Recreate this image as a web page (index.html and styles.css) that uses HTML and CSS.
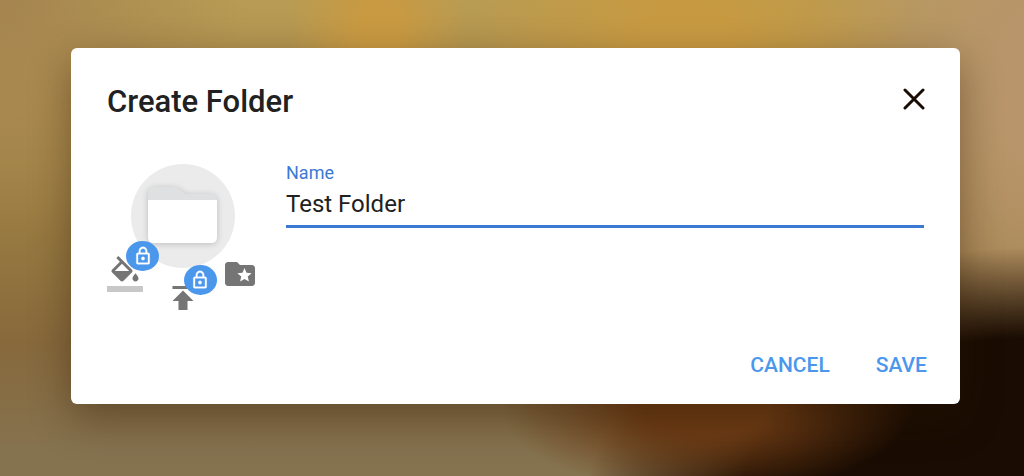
FILE: index.html
```
<!DOCTYPE html>
<html lang="en">
<head>
    <meta charset="UTF-8">
    <meta name="viewport" content="width=device-width, initial-scale=1.0">
    <title>Create Folder</title>
    <link rel="stylesheet" href="styles.css">
</head>
<body>
    <form class="dialog" role="dialog" aria-labelledby="dialogTitle">
        <header class="dialog-header">
            <h1 id="dialogTitle">Create Folder</h1>
            <button type="button" class="close-btn" aria-label="Close">
                <svg viewBox="0 0 22 22"><path d="M2 2l18 18M20 2L2 20"/></svg>
            </button>
        </header>

        <div class="dialog-body">
            <div class="icon-picker">
                <div class="folder-preview">
                    <svg viewBox="0 0 104 104">
                        <path class="folder-back" d="M17 30q0-7 7-7h19q3 0 5 2l4 3q2 2 5 2h22q7 0 7 7v35q0 7-7 7H24q-7 0-7-7z"/>
                        <path class="folder-front" d="M17 36h69v37q0 6-6 6H23q-6 0-6-6z"/>
                    </svg>
                </div>
                <div class="icon-tools">
                    <button type="button" class="tool" aria-label="Folder color">
                        <svg viewBox="0 0 24 24">
                            <path d="M16.56 8.94L7.62 0 6.21 1.41l2.38 2.38-5.15 5.15c-.59.59-.59 1.54 0 2.12l5.5 5.5c.29.29.68.44 1.06.44s.77-.15 1.06-.44l5.5-5.5c.59-.58.59-1.53 0-2.12zM5.21 10L10 5.21 14.79 10H5.21zM19 11.5s-2 2.17-2 3.5c0 1.1.9 2 2 2s2-.9 2-2c0-1.33-2-3.5-2-3.5z"/>
                            <path class="swatch" d="M0 20h24v4H0z"/>
                        </svg>
                        <span class="lock-badge">
                            <svg viewBox="0 0 24 24"><path d="M12 17c1.1 0 2-.9 2-2s-.9-2-2-2-2 .9-2 2 .9 2 2 2zm6-9h-1V6c0-2.76-2.24-5-5-5S7 3.24 7 6v2H6c-1.1 0-2 .9-2 2v10c0 1.1.9 2 2 2h12c1.1 0 2-.9 2-2V10c0-1.1-.9-2-2-2zM8.9 6c0-1.71 1.39-3.1 3.1-3.1s3.1 1.39 3.1 3.1v2H8.9V6zM18 20H6V10h12v10z"/></svg>
                        </span>
                    </button>
                    <button type="button" class="tool tool-upload" aria-label="Upload icon">
                        <svg viewBox="0 0 24 24"><path d="M5 4v2h14V4H5zm0 10h4v6h6v-6h4l-7-7-7 7z"/></svg>
                        <span class="lock-badge">
                            <svg viewBox="0 0 24 24"><path d="M12 17c1.1 0 2-.9 2-2s-.9-2-2-2-2 .9-2 2 .9 2 2 2zm6-9h-1V6c0-2.76-2.24-5-5-5S7 3.24 7 6v2H6c-1.1 0-2 .9-2 2v10c0 1.1.9 2 2 2h12c1.1 0 2-.9 2-2V10c0-1.1-.9-2-2-2zM8.9 6c0-1.71 1.39-3.1 3.1-3.1s3.1 1.39 3.1 3.1v2H8.9V6zM18 20H6V10h12v10z"/></svg>
                        </span>
                    </button>
                    <button type="button" class="tool" aria-label="Choose icon">
                        <svg viewBox="0 0 24 24"><path d="M20 6h-8l-2-2H4c-1.1 0-1.99.9-1.99 2L2 18c0 1.1.9 2 2 2h16c1.1 0 2-.9 2-2V8c0-1.1-.9-2-2-2zm-2.06 11L15 15.28 12.06 17l.78-3.33-2.59-2.24 3.41-.29L15 8l1.34 3.14 3.41.29-2.59 2.24.78 3.33z"/></svg>
                    </button>
                </div>
            </div>

            <div class="field">
                <label for="folderName">Name</label>
                <input type="text" id="folderName" value="Test Folder">
            </div>
        </div>

        <footer class="dialog-footer">
            <button type="button" class="text-btn">CANCEL</button>
            <button type="submit" class="text-btn">SAVE</button>
        </footer>
    </form>
</body>
</html>
```
FILE: styles.css
```
* {
    margin: 0;
    padding: 0;
    box-sizing: border-box;
}

body {
    font-family: Roboto, 'Helvetica Neue', Arial, sans-serif;
    color: #212121;
    min-height: 100vh;
    padding: 48px 64px 72px 71px;
    background:
        radial-gradient(ellipse 9% 26% at 37% 6%, #c99a42 20%, rgba(201, 154, 66, 0) 100%),
        radial-gradient(ellipse 22% 40% at 67% 8%, #c79a42 20%, rgba(199, 154, 66, 0) 100%),
        radial-gradient(ellipse 20% 18% at 69% 86%, #6d3c15 30%, rgba(109, 60, 21, 0) 100%),
        radial-gradient(ellipse 44% 56% at 101% 108%, #1a0c02 66%, rgba(26, 12, 2, 0) 100%),
        radial-gradient(ellipse 26% 80% at 102% 18%, #b8956a 20%, rgba(184, 149, 106, 0) 100%),
        radial-gradient(ellipse 24% 50% at 0% 0%, #a5844f 0%, rgba(165, 132, 79, 0) 100%),
        linear-gradient(#b89c54 0%, #ab8c4c 24%, #967940 50%, #87693c 72%, #857350 96%);
    background-repeat: no-repeat;
}

button {
    background: none;
    border: none;
    font-family: inherit;
    cursor: pointer;
}

svg {
    display: block;
}

.dialog {
    background: #fff;
    border-radius: 6px;
    box-shadow: 0 14px 40px rgba(40, 20, 0, 0.4);
}

.dialog-header {
    display: flex;
    justify-content: space-between;
    align-items: flex-start;
    padding: 36px 35px 0 36px;
}

.dialog-header h1 {
    font-size: 31px;
    font-weight: 500;
    line-height: 36px;
}

.close-btn {
    padding-top: 4px;
}

.close-btn svg {
    width: 22px;
    height: 22px;
    fill: none;
    stroke: #1a0c02;
    stroke-width: 3;
    stroke-linecap: round;
}

.dialog-body {
    display: flex;
    gap: 28px;
    padding: 44px 36px 0;
}

.icon-picker {
    width: 151px;
    flex-shrink: 0;
}

.folder-preview {
    width: 104px;
    height: 104px;
    margin: 0 auto;
    border-radius: 50%;
    background: #ebebeb;
}

.folder-back {
    fill: #dfe0e1;
    filter: drop-shadow(0 1px 3px rgba(0, 0, 0, 0.2));
}

.folder-front {
    fill: #fff;
}

.icon-tools {
    display: flex;
    justify-content: space-between;
    align-items: flex-start;
    margin-top: -12px;
}

.tool {
    position: relative;
    width: 36px;
    height: 36px;
}

.tool > svg {
    width: 36px;
    height: 36px;
    fill: #757575;
}

.tool .swatch {
    fill: #c8c8c8;
}

.tool-upload {
    margin-top: 24px;
}

.lock-badge {
    position: absolute;
    top: -15px;
    left: 19px;
    width: 33px;
    height: 30px;
    display: flex;
    align-items: center;
    justify-content: center;
    border-radius: 50%;
    background: #4a97ec;
}

.lock-badge svg {
    width: 20px;
    height: 20px;
    fill: #fff;
    stroke: #fff;
    stroke-width: 0.4;
}

.field {
    flex: 1;
    display: flex;
    flex-direction: column;
}

.field label {
    font-size: 18px;
    line-height: 18px;
    color: #3b7ad3;
}

.field input {
    width: 100%;
    height: 46px;
    border: none;
    border-bottom: 3px solid #3b7ad3;
    outline: none;
    background: transparent;
    font-family: inherit;
    font-size: 24px;
    color: #212121;
}

.dialog-footer {
    display: flex;
    justify-content: flex-end;
    gap: 46px;
    padding: 37px 33px 27px;
}

.text-btn {
    font-size: 21px;
    font-weight: 500;
    line-height: 24px;
    color: #4a97ec;
}
```
